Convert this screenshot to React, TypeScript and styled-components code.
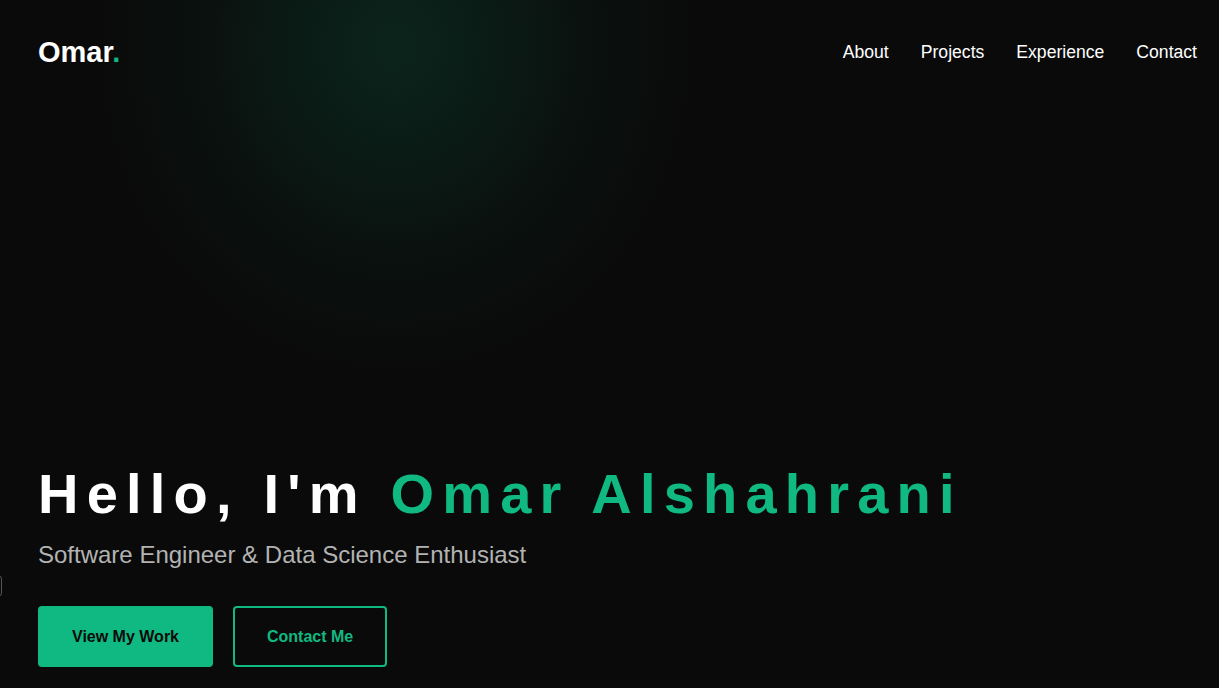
import React from "react";
import styled, { createGlobalStyle } from "styled-components";

const Global = createGlobalStyle`
  html, body { margin: 0; padding: 0; background: #0a0a0a; }
  body { font-family: "Liberation Sans", Arial, sans-serif; color: #fff; overflow: hidden; }
  * { box-sizing: border-box; }
`;

const Page = styled.div`
  position: relative;
  height: 688px;
  display: flex;
  flex-direction: column;
  background:
    radial-gradient(ellipse 300px 330px at 395px 45px, rgba(16, 185, 129, 0.15) 0%, rgba(16, 185, 129, 0.1) 30%, rgba(16, 185, 129, 0.04) 65%, rgba(16, 185, 129, 0) 100%),
    #0a0a0a;
  overflow: hidden;
`;

const Header = styled.header`
  display: flex;
  align-items: center;
  justify-content: space-between;
  padding: 37px 22px 0 38px;
`;

const Logo = styled.div`
  font-size: 29px;
  font-weight: 700;
  color: #fff;
  line-height: 30px;
`;

const Dot = styled.span`
  color: #10b981;
`;

const Nav = styled.nav`
  display: flex;
  gap: 32px;
`;

const NavLink = styled.a`
  font-size: 17.6px;
  color: #fff;
  text-decoration: none;
  line-height: 30px;
`;

const Hero = styled.section`
  flex: 1;
  display: flex;
  flex-direction: column;
  justify-content: flex-end;
  padding: 0 38px 21px 38px;
`;

const Title = styled.h1`
  margin: 0;
  font-size: 56px;
  font-weight: 700;
  letter-spacing: 8.2px;
  line-height: 66px;
  color: #fff;
  white-space: nowrap;
`;

const Accent = styled.span`
  color: #10b981;
`;

const Subtitle = styled.p`
  margin: 13px 0 0 0;
  font-size: 24px;
  line-height: 30px;
  color: #b3b3b3;
`;

const Actions = styled.div`
  display: flex;
  gap: 20px;
  margin-top: 36px;
`;

const Button = styled.a<{ $outline?: boolean }>`
  display: flex;
  align-items: center;
  justify-content: center;
  height: 61px;
  padding: 0 32px;
  border-radius: 4px;
  font-size: 16px;
  font-weight: 700;
  text-decoration: none;
  background: ${(p) => (p.$outline ? "transparent" : "#10b981")};
  color: ${(p) => (p.$outline ? "#10b981" : "#0a0a0a")};
  border: 2px solid #10b981;
`;

const EdgeTab = styled.div`
  position: absolute;
  left: -20px;
  top: 575px;
  width: 22px;
  height: 22px;
  border: 1px solid #555;
  border-radius: 4px;
`;

export default function App() {
  return (
    <>
      <Global />
      <Page>
        <Header>
          <Logo>
            Omar<Dot>.</Dot>
          </Logo>
          <Nav>
            <NavLink href="#about">About</NavLink>
            <NavLink href="#projects">Projects</NavLink>
            <NavLink href="#experience">Experience</NavLink>
            <NavLink href="#contact">Contact</NavLink>
          </Nav>
        </Header>
        <Hero>
          <Title>
            Hello, I'm <Accent>Omar Alshahrani</Accent>
          </Title>
          <Subtitle>Software Engineer &amp; Data Science Enthusiast</Subtitle>
          <Actions>
            <Button href="#projects">View My Work</Button>
            <Button $outline href="#contact">Contact Me</Button>
          </Actions>
        </Hero>
        <EdgeTab />
      </Page>
    </>
  );
}
